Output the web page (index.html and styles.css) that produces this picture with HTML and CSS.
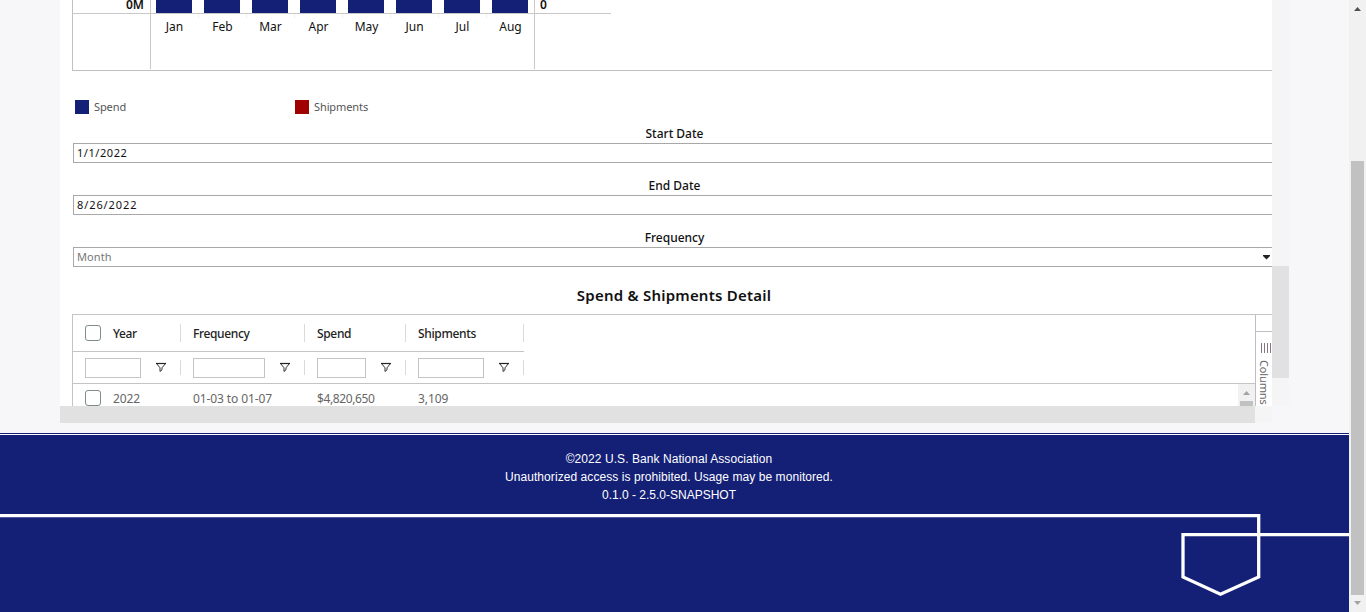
FILE: index.html
```html
<!DOCTYPE html>
<html lang="en">
<head>
<meta charset="utf-8">
<title>Spend &amp; Shipments</title>
<link rel="stylesheet" href="styles.css">
</head>
<body>
<svg class="defs" width="0" height="0"><symbol id="funnel" viewBox="0 0 12 12"><path d="M1.5 1.5H10.5L7 5.8V7.8L5 9.5V5.8Z" fill="none" stroke="#333" stroke-width="1"/><path d="M1 1.5H11" stroke="#222" stroke-width="1.2"/></symbol></svg>
<div class="window">
<div class="page">
  <main class="content">
    <div class="viewport">
      <div class="report">
        <section class="chart">
          <div class="plot">
            <span class="axis-left">0M</span>
            <div class="bars"><i></i><i></i><i></i><i></i><i></i><i></i><i></i><i></i></div>
            <span class="axis-right">0</span>
          </div>
          <div class="months">
            <span>Jan</span><span>Feb</span><span>Mar</span><span>Apr</span><span>May</span><span>Jun</span><span>Jul</span><span>Aug</span>
          </div>
        </section>
        <div class="legend">
          <div class="key"><i class="swatch navy"></i><span>Spend</span></div>
          <div class="key"><i class="swatch red"></i><span>Shipments</span></div>
        </div>
        <div class="field"><label>Start Date</label><div class="box"><span class="start">1/1/2022</span></div></div>
        <div class="field"><label>End Date</label><div class="box"><span class="end">8/26/2022</span></div></div>
        <div class="field"><label>Frequency</label><div class="box select"><span>Month</span><svg width="7" height="5" viewBox="0 0 7 5"><path d="M0 0H7V1L3.5 4.5L0 1Z" fill="#222"/></svg></div></div>
        <h2>Spend &amp; Shipments Detail</h2>
        <section class="table">
          <div class="grid">
            <div class="row head">
              <div class="cell"><i class="check"></i><span>Year</span><b></b></div>
              <div class="cell"><span>Frequency</span><b></b></div>
              <div class="cell"><span>Spend</span><b></b></div>
              <div class="cell"><span>Shipments</span><b></b></div>
            </div>
            <div class="row filters">
              <div class="cell"><i class="input"></i><svg class="funnel"><use href="#funnel"/></svg><b></b></div>
              <div class="cell"><i class="input"></i><svg class="funnel"><use href="#funnel"/></svg><b></b></div>
              <div class="cell"><i class="input"></i><svg class="funnel"><use href="#funnel"/></svg><b></b></div>
              <div class="cell"><i class="input"></i><svg class="funnel"><use href="#funnel"/></svg><b></b></div>
            </div>
            <div class="body">
              <div class="row data">
                <div class="cell"><i class="check"></i><span>2022</span></div>
                <div class="cell"><span>01-03 to 01-07</span></div>
                <div class="cell"><span class="money">$4,820,650</span></div>
                <div class="cell"><span>3,109</span></div>
              </div>
              <div class="mini-scroll"><svg width="7" height="4" viewBox="0 0 7 4"><path d="M0 4L3.5 0L7 4Z" fill="#a3a3a3"/></svg><i></i></div>
            </div>
          </div>
          <aside class="side">
            <div class="side-top"></div>
            <svg class="lines" width="12" height="10"><path d="M1.5 0V10M4.5 0V10M7.5 0V10M10.5 0V10" stroke="#85757f"/></svg>
            <span>Columns</span>
          </aside>
        </section>
      </div>
      <div class="vbar"><i></i></div>
    </div>
    <div class="hbar"><i></i></div>
  </main>
  <footer>
    <div class="legal">
      <p>©2022 U.S. Bank National Association</p>
      <p>Unauthorized access is prohibited. Usage may be monitored.</p>
      <p class="version">0.1.0 - 2.5.0-SNAPSHOT</p>
    </div>
    <svg class="shield" width="1349" height="100" viewBox="0 0 1349 100"><path d="M0 3.6H1258.7V65L1220.5 82.3L1183 65V22.6H1349" fill="none" stroke="#fff" stroke-width="3.3"/></svg>
  </footer>
</div>
<div class="scrollbar">
  <svg width="7" height="4" viewBox="0 0 7 4"><path d="M0 4L3.5 0L7 4Z" fill="#505050"/></svg>
  <i></i>
  <svg width="7" height="4" viewBox="0 0 7 4"><path d="M0 0L3.5 4L7 0Z" fill="#a3a3a3"/></svg>
</div>
</div>
</body>
</html>
```
FILE: styles.css
```css
* { box-sizing: border-box; }
body { margin: 0; font-family: "Noto Sans", "Open Sans", sans-serif; font-size: 12px; color: #111; }
i, b { display: block; flex: none; }
.defs { display: none; }
span { white-space: nowrap; }
.window { display: flex; width: 1366px; height: 612px; overflow: hidden; }
.page { width: 1349px; background: #f7f7fa; }
.content { height: 433px; padding-left: 60px; }
.viewport { display: flex; width: 1229px; height: 406px; }
.report { width: 1212px; height: 406px; padding-left: 12px; background: #fff; overflow: hidden; }
.vbar { width: 17px; padding-top: 266px; background: #f5f5f5; }
.vbar i { height: 112px; background: #e1e1e1; }
.hbar { width: 1212px; height: 17px; background: #f5f5f5; }
.hbar i { width: 1195px; height: 17px; background: #e1e1e1; }

.chart { height: 71px; border-left: 1px solid #c0c0c0; border-bottom: 1px solid #c0c0c0; }
.plot { display: flex; width: 538px; height: 14px; border-bottom: 1px solid #c8c8c8; font-weight: 600; }
.axis-left { width: 77px; height: 13px; padding-right: 6px; text-align: right; line-height: 10px; }
.axis-right { padding-left: 5px; line-height: 10px; }
.bars { display: flex; gap: 12px; width: 385px; height: 13px; padding-left: 5px; border-left: 1px solid #c8c8c8; border-right: 1px solid #c8c8c8; }
.bars i { width: 36px; background: #142076; }
.months { display: flex; width: 385px; height: 55px; margin-left: 77px; border: solid #c8c8c8; border-width: 0 1px; }
.months span { width: 48px; flex: none; padding-right: 1px; text-align: center; line-height: 26px; }
.months span:not(:last-child) { background: linear-gradient(#eee, #eee) right top / 1px 4px no-repeat; }
.months span:last-child { width: 47px; padding-right: 0; }

.legend { display: flex; height: 54px; padding: 29px 0 0 3px; }
.key { display: flex; width: 220px; gap: 5px; font-size: 11px; line-height: 14px; letter-spacing: -.1px; color: #555; }
.swatch { width: 14px; height: 14px; }
.navy { background: #142076; }
.red { background: #a00000; }
.field { height: 52px; padding-left: 1px; }
.field label { display: block; height: 18px; padding-left: 4px; text-align: center; line-height: 17px; font-weight: 500; font-size: 12px; }
.box { display: flex; align-items: center; justify-content: space-between; height: 20px; padding: 0 3px; border: 1px solid #a8a8a8; border-right: 0; font-size: 11px; line-height: 18px; }
.start { letter-spacing: .55px; }
.end { letter-spacing: .9px; }
.select { padding-right: 2px; color: #777; letter-spacing: .1px; }
h2 { height: 33px; margin: 0; padding-left: 4px; text-align: center; font-size: 15px; font-weight: 600; line-height: 28px; letter-spacing: .22px; }

.table { display: flex; height: 92px; border-top: 1px solid #c4c4c4; border-left: 1px solid #c4c4c4; }
.grid { width: 1182px; }
.row { display: grid; grid-template-columns: 108px 124px 101px 118px; width: 451px; }
.cell { display: flex; align-items: center; padding-left: 12px; }
.cell b { width: 1px; height: 18px; margin-left: auto; background: #dadada; }
.head { height: 37px; border-bottom: 1px solid #c4c4c4; font-weight: 500; color: #222; letter-spacing: -.35px; }
.check { width: 16px; height: 16px; margin-right: 12px; border: 1px solid #7f8c8d; border-radius: 3px; background: #fff; }
.filters { width: 100%; height: 32px; border-bottom: 1px solid #c4c4c4; }
.filters b { height: 15px; }
.input { width: 56px; height: 20px; border: 1px solid #c4c4c4; }
.cell:nth-child(2) .input { width: 72px; }
.cell:nth-child(3) .input { width: 49px; }
.cell:nth-child(4) .input { width: 66px; }
.funnel { width: 12px; height: 12px; margin-left: 14px; }
.body { display: flex; justify-content: space-between; height: 22px; overflow: hidden; }
.data { height: 28px; color: #666; letter-spacing: -.1px; }
.money { letter-spacing: -.4px; }
.mini-scroll { display: flex; flex-direction: column; align-items: center; justify-content: space-between; width: 17px; height: 22px; padding-top: 7px; background: #f1f1f1; }
.mini-scroll i { width: 13px; height: 5px; background: #c1c1c1; }
.side { width: 17px; border-left: 1px solid #babfc7; overflow: hidden; color: #666; }
.side-top { height: 17px; border-bottom: 1px solid #babfc7; }
.lines { display: block; margin: 11px 0 7px 4px; }
.side span { display: block; width: 16px; height: 46px; padding-left: 1px; writing-mode: vertical-rl; line-height: 15px; font-size: 11px; letter-spacing: -.15px; }

footer { height: 179px; background: #142076; border-top: 1px solid #142076; }
.legal { height: 80px; border-top: 1px solid #fff; padding-top: 15px; color: #fff; font-family: "Liberation Sans", Arial, sans-serif; font-size: 12px; text-align: center; letter-spacing: .065px; }
.legal p { margin: 0; padding-right: 11px; line-height: 18px; white-space: nowrap; }
.legal .version { letter-spacing: 0; }
.shield { display: block; margin-top: -2px; }
.scrollbar { display: flex; flex-direction: column; align-items: center; width: 17px; height: 612px; padding-top: 7px; background: #f1f1f1; }
.scrollbar i { width: 13px; height: 434px; margin: 150px 0 6px; background: #c1c1c1; }
```
